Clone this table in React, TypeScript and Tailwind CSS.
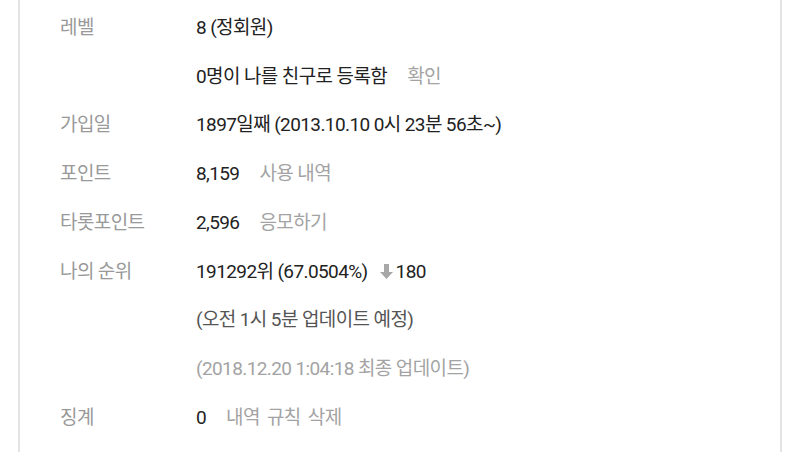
import React from "react";

const font = { fontFamily: '"Roboto", "Noto Sans CJK KR", sans-serif' };

function Row({ label, children }: { label?: string; children: React.ReactNode }) {
  return (
    <div className="flex items-center h-[48.75px]">
      <div className="w-[176px] shrink-0 pl-[40px] text-[#999999]">{label}</div>
      <div className="flex items-center text-[#222222]">{children}</div>
    </div>
  );
}

export default function App() {
  return (
    <div className="w-[800px] h-[452px] bg-white overflow-hidden" style={font}>
      <div className="ml-[18px] w-[764px] h-[452px] border-l-2 border-r-2 border-[#e3e3e3] pt-[3px] text-[19px] tracking-[-0.6px] leading-none">
        <Row label="레벨">8 (정회원)</Row>
        <Row>
          0명이 나를 친구로 등록함<span className="ml-[20px] text-[#a3a3a3]">확인</span>
        </Row>
        <Row label="가입일">1897일째 (2013.10.10 0시 23분 56초~)</Row>
        <Row label="포인트">
          8,159<span className="ml-[20px] text-[#a3a3a3]">사용 내역</span>
        </Row>
        <Row label="타롯포인트">
          2,596<span className="ml-[20px] text-[#a3a3a3]">응모하기</span>
        </Row>
        <Row label="나의 순위">
          191292위 (67.0504%)
          <svg className="ml-[12px] mr-[3px]" width="13" height="15" viewBox="0 0 13 15">
            <path d="M4 0h5v8h4l-6.5 7L0 8h4z" fill="#a8a8a8" />
          </svg>
          180
        </Row>
        <Row>
          <span className="text-[#555555]">(오전 1시 5분 업데이트 예정)</span>
        </Row>
        <Row>
          <span className="text-[#a3a3a3]">(2018.12.20 1:04:18 최종 업데이트)</span>
        </Row>
        <Row label="징계">
          0
          <span className="ml-[20px] text-[#a3a3a3] [word-spacing:3px]">내역 규칙 삭제</span>
        </Row>
      </div>
    </div>
  );
}
